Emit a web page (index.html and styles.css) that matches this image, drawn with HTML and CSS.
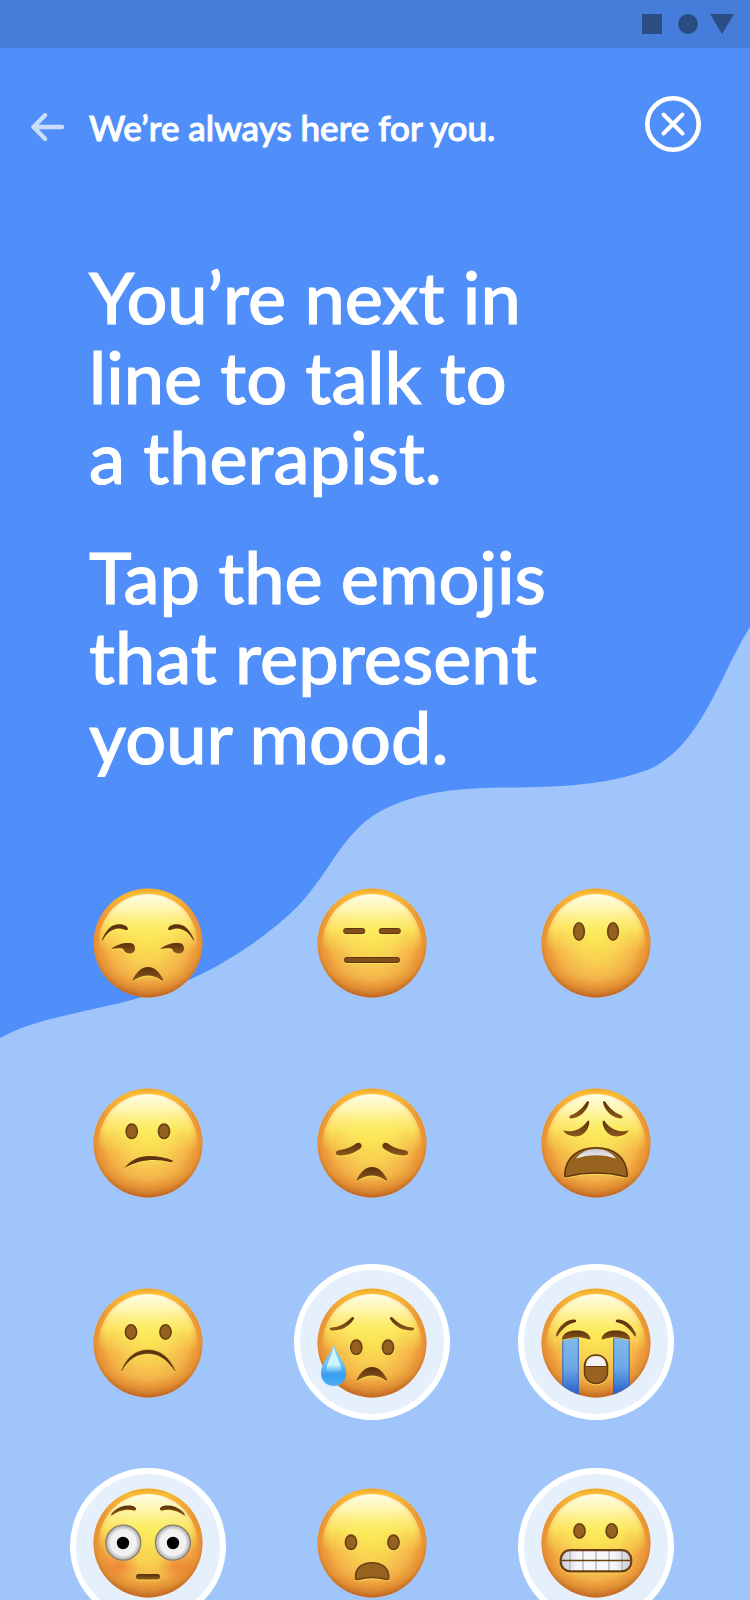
FILE: index.html
```html
<!DOCTYPE html>
<html lang="en">
<head>
<meta charset="utf-8">
<meta name="viewport" content="width=device-width, initial-scale=1">
<title>We’re always here for you.</title>
<link rel="stylesheet" href="styles.css">
</head>
<body>
<svg class="defs" width="0" height="0" aria-hidden="true">
  <defs>
    <linearGradient id="g-body" x1="0" y1="0" x2="0" y2="1">
      <stop offset="0" stop-color="#fbb02a"/><stop offset=".05" stop-color="#ffcb35"/>
      <stop offset=".25" stop-color="#f79f38"/><stop offset=".55" stop-color="#f4a03c"/>
      <stop offset=".8" stop-color="#f0a440"/><stop offset="1" stop-color="#e08c35"/>
    </linearGradient>
    <radialGradient id="g-glow" gradientUnits="userSpaceOnUse" cx="0" cy="-4" r="53">
      <stop offset="0" stop-color="#fbe150"/><stop offset=".45" stop-color="#f8d252" stop-opacity=".95"/>
      <stop offset=".75" stop-color="#f6c250" stop-opacity=".6"/><stop offset="1" stop-color="#f5b045" stop-opacity="0"/>
    </radialGradient>
    <linearGradient id="g-shine" x1="0" y1="0" x2="0" y2="1">
      <stop offset="0" stop-color="#fffde6"/><stop offset=".14" stop-color="#fffcc0" stop-opacity=".93"/>
      <stop offset=".36" stop-color="#fdf566" stop-opacity=".7"/><stop offset=".6" stop-color="#fbea5c" stop-opacity="0"/>
    </linearGradient>
    <radialGradient id="g-edge" gradientUnits="userSpaceOnUse" cx="0" cy="-5" r="60">
      <stop offset=".7" stop-color="#c8701f" stop-opacity="0"/><stop offset=".88" stop-color="#c0661c" stop-opacity=".25"/>
      <stop offset="1" stop-color="#b05218" stop-opacity=".75"/>
    </radialGradient>
    <linearGradient id="g-brown" x1="0" y1="0" x2="0" y2="1">
      <stop offset="0" stop-color="#5a300d"/><stop offset="1" stop-color="#8c581c"/>
    </linearGradient>
    <linearGradient id="g-drop" x1="0" y1="0" x2="0" y2="1">
      <stop offset="0" stop-color="#8fcdf0"/><stop offset=".45" stop-color="#6fc3f5"/>
      <stop offset=".75" stop-color="#3a9df0"/><stop offset="1" stop-color="#4fb2f6"/>
    </linearGradient>
    <linearGradient id="g-drop-light" x1="0" y1="0" x2="0" y2="1">
      <stop offset="0" stop-color="#e0f8fe"/><stop offset=".7" stop-color="#c4f4ff"/><stop offset="1" stop-color="#8fd8fb" stop-opacity="0"/>
    </linearGradient>
    <linearGradient id="g-stream" x1="0" y1="0" x2="0" y2="1">
      <stop offset="0" stop-color="#83b9e9"/><stop offset=".5" stop-color="#6ba9e6"/><stop offset="1" stop-color="#2255c8"/>
    </linearGradient>
    <radialGradient id="g-eyeball">
      <stop offset=".72" stop-color="#f1f1f1"/><stop offset="1" stop-color="#a8a8a8"/>
    </radialGradient>
    <radialGradient id="g-cheek">
      <stop offset="0" stop-color="#ec6a2c" stop-opacity=".6"/><stop offset="1" stop-color="#ec6a2c" stop-opacity="0"/>
    </radialGradient>
    <linearGradient id="g-teeth" x1="0" y1="0" x2="1" y2="0">
      <stop offset="0" stop-color="#c9cbd2"/><stop offset=".25" stop-color="#f6f7fa"/>
      <stop offset=".75" stop-color="#f6f7fa"/><stop offset="1" stop-color="#c9cbd2"/>
    </linearGradient>
    <linearGradient id="g-upper-teeth" x1="0" y1="0" x2="0" y2="1">
      <stop offset="0" stop-color="#c8c9cf"/><stop offset="1" stop-color="#f2f2f6"/>
    </linearGradient>
    <clipPath id="face-clip"><circle r="54.5"/></clipPath>
    <g id="head">
      <circle r="54.5" fill="url(#g-body)"/>
      <circle r="54.5" fill="url(#g-glow)"/>
      <circle r="49" fill="url(#g-shine)"/>
      <circle r="54.5" fill="url(#g-edge)"/>
    </g>
    <ellipse id="eye" rx="5.6" ry="7.2" fill="#94611f" stroke="#6b3f13" stroke-width="1.6"/>
    <path id="pout" d="M-15.5 37C-11 28-6 24 0 24C6 24 11 28 15.3 37C15.3 38 14 38 13 37C5 31-5 31-13.5 37C-14.5 38-15.8 38-15.5 37Z" fill="url(#g-brown)"/>
    <g id="ring"><circle r="75" fill="#e6f0fd" stroke="#fff" stroke-width="6"/></g>
  </defs>
</svg>

<div class="screen">
  <svg class="wave" viewBox="0 0 750 1600" preserveAspectRatio="none" aria-hidden="true">
    <path d="M0 1038C38 1017 90 1012 143 997C200 981 260 944 298 906C330 873 342 833 379 812C420 790 462 788 510 787.5C560 787 610 785 650 769C702 745 720 674 750 627V1600H0Z" fill="#a0c5fa"/>
  </svg>

  <div class="content">
    <div class="status-bar" aria-hidden="true">
      <svg width="92" height="20" viewBox="0 0 92 20" fill="#2a4d84"><path d="M0 0H20V20H0Z"/><circle cx="46" cy="10" r="10"/><path d="M68 0H92L80 20Z"/></svg>
    </div>

    <header class="header">
      <button class="back" type="button" aria-label="Back">
        <svg width="34" height="28" viewBox="0 0 34 28" fill="none" stroke="#cbddfd" stroke-width="4.4" stroke-linecap="round" stroke-linejoin="round"><path d="M14 2.2L2.5 14L14 25.8M2.5 14H31"/></svg>
      </button>
      <p class="header-title">We’re always here for you.</p>
      <button class="close" type="button" aria-label="Close">
        <svg width="56" height="56" viewBox="0 0 56 56" fill="none" stroke="#fff" stroke-width="4" stroke-linecap="round"><circle cx="28" cy="28" r="25.7" stroke-width="4.6"/><path d="M18.5 18.5L37.5 37.5M37.5 18.5L18.5 37.5"/></svg>
      </button>
    </header>

    <main class="main">
      <h1 class="prompt">
        <span class="prompt-part">You’re next in<br>line to talk to<br>a therapist.</span>
        <span class="prompt-part">Tap the emojis<br>that represent<br>your mood.</span>
      </h1>

      <div class="moods" role="group" aria-label="Moods">
        <button class="mood" type="button" aria-pressed="false" aria-label="Unamused">
          <svg class="face" viewBox="-78 -78 156 156"><use href="#head"/>
            <g class="marks" fill="url(#g-brown)">
              <path id="arch" d="M-46-3C-42-14-36-18.8-29-18.8C-24-18.8-21-17-20-14.5C-20-12.5-22-12.5-24-13.5C-33-17-41-11-45-3C-45.5-2.5-46-2.5-46-3Z" fill="#5e330f"/>
              <use href="#arch" transform="scale(-1 1)"/>
              <path id="side-eye" d="M-37 6C-31 1-24-.5-18 0C-14.5 .3-13 2.5-13 5.5C-13 9-15.5 11-19 10.5C-23 10-24 8-25 5.8C-29 4.8-33 5.5-37 6Z"/>
              <use href="#side-eye" x="49"/><use href="#pout"/>
            </g></svg>
        </button>
        <button class="mood" type="button" aria-pressed="false" aria-label="Expressionless">
          <svg class="face" viewBox="-78 -78 156 156"><use href="#head"/>
            <g class="marks" fill="#84501a" stroke="#5e3410"><rect x="-28.3" y="-14.5" width="21" height="5" rx="2"/><rect x="7.3" y="-14.5" width="21" height="5" rx="2"/><rect x="-27.5" y="14.5" width="55" height="5" rx="2"/></g></svg>
        </button>
        <button class="mood" type="button" aria-pressed="false" aria-label="Speechless">
          <svg class="face" viewBox="-78 -78 156 156"><use href="#head"/>
            <g class="marks" fill="#94611f" stroke="#6b3f13" stroke-width="1.6"><ellipse cx="-17" cy="-11.5" rx="5.3" ry="8.7"/><ellipse cx="17" cy="-11.5" rx="5.3" ry="8.7"/></g></svg>
        </button>

        <button class="mood" type="button" aria-pressed="false" aria-label="Confused">
          <svg class="face" viewBox="-78 -78 156 156"><use href="#head"/>
            <g class="marks"><use href="#eye" x="-16.3" y="-11.7"/><use href="#eye" x="16" y="-11.7"/>
            <path d="M-23.5 25C-17 16.5-8 13 1 13C10 13 18 14.5 24.5 17.5C25 19 24 19.5 22 19C8 15.5-8 16-23.5 25Z" fill="#5e330f"/></g></svg>
        </button>
        <button class="mood" type="button" aria-pressed="false" aria-label="Disappointed">
          <svg class="face" viewBox="-78 -78 156 156"><use href="#head"/>
            <g class="marks" fill="url(#g-brown)">
              <path id="droop" d="M-34 12.2C-37 12-37 7.8-33 7.3C-26 6.5-20 3.5-15.5 .2C-12-1.8-9 2.2-11 4.8C-16.5 10-26 13.2-34 12.2Z"/>
              <use href="#droop" transform="scale(-1 1)"/><use href="#pout"/></g></svg>
        </button>
        <button class="mood" type="button" aria-pressed="false" aria-label="Weary">
          <svg class="face" viewBox="-78 -78 156 156"><use href="#head"/>
            <g class="marks" fill="url(#g-brown)">
              <path id="weary-brow" d="M-25-24.5C-27.5-25-27-27.5-24.5-28C-17-31-13-36-9-41.5C-7.5-43-6.5-41-7.5-38.5C-10-31-17-25-25-24.5Z"/>
              <use href="#weary-brow" transform="scale(-1 1)"/>
              <path id="weary-eye" d="M-33-12.5C-26-10.5-15-12-8.5-22C-7.5-23.5-6.3-22-6.8-19C-9-9-16-6.5-21-6.5C-27-7-31-9-33-12.5Z"/>
              <use href="#weary-eye" transform="scale(-1 1)"/>
              <path d="M-31.3 32C-30.5 14-18 4.7 0 4.7C18 4.7 30.5 14 31.3 32C31.3 34 30.5 34 29 33.5C10 29-10 29-29 33.5C-30.5 34-31.3 34-31.3 32Z" fill="#97631f" stroke="#63370f" stroke-width="1.6"/>
              <path d="M-20 15.5C-15 9-8 6 0 6C8 6 15 9 20 15.5C8 11-8 11-20 15.5Z" fill="url(#g-upper-teeth)"/></g></svg>
        </button>

        <button class="mood" type="button" aria-pressed="false" aria-label="Frowning">
          <svg class="face" viewBox="-78 -78 156 156"><use href="#head"/>
            <g class="marks"><use href="#eye" x="-17" y="-11"/><use href="#eye" x="17.5" y="-11"/>
            <path d="M-26.5 28C-21 13-11 7 0 7C11 7 21 13 27 28C18 15 10 10.5 0 10.5C-10 10.5-19 15-26.5 28Z" fill="#5e330f" stroke="#5e330f" stroke-width=".5"/></g></svg>
        </button>
        <button class="mood" type="button" aria-pressed="true" aria-label="Sad but relieved">
          <svg class="face" viewBox="-78 -78 156 156"><use href="#ring" y="-1"/><use href="#head"/>
            <g class="marks" fill="url(#g-brown)">
              <path id="sad-brow" d="M-40-12.5C-43-13-43-15.5-39.5-15.5C-31-16-25-21-20.5-25.5C-18.5-27-17-25.5-18.5-23.5C-23-16-32-12-40-12.5Z"/>
              <use href="#sad-brow" transform="scale(-1 1)"/>
              <use href="#eye" x="-15.7" y="4.3"/><use href="#eye" x="16" y="4.3"/><use href="#pout"/></g>
            <path d="M-38.3 1C-36 11-25.7 19-25.7 30.5C-25.7 37.5-31 43-38.3 43C-45.5 43-51 37.5-51 30.5C-51 19-40.5 11-38.3 1Z" fill="url(#g-drop)"/>
            <path d="M-38.3 4C-36 13-31 20-30.5 27C-33 31-43 31-46 27C-45 20-40.5 13-38.3 4Z" fill="url(#g-drop-light)"/></svg>
        </button>
        <button class="mood" type="button" aria-pressed="true" aria-label="Crying loudly">
          <svg class="face" viewBox="-78 -78 156 156"><use href="#ring" y="-1"/><use href="#head"/>
            <g clip-path="url(#face-clip)" fill="url(#g-stream)" stroke="#2b67cf"><rect x="-33.2" y="-5" width="15.5" height="60"/><rect x="17.7" y="-5" width="15.5" height="60"/></g>
            <g class="marks" fill="url(#g-brown)">
              <path id="cry-brow" d="M-39.5-6.5C-40.5-7-40-9.5-39-11C-35-19-28-24-21.5-23.5C-19-23-19.5-21-21.5-20.5C-28-19-33-15-38-7.5C-38.5-6.5-39-6-39.5-6.5Z"/>
              <use href="#cry-brow" transform="scale(-1 1)"/>
              <path id="cry-eye" d="M-34-5C-32-11-25-13-19.5-12.5C-12-12.5-7-10-5.5-4.5C-5.5-3-7-3.5-8.5-4C-16-7-25-6-32-3.5C-33.5-3-34.5-3.5-34-5Z"/>
              <use href="#cry-eye" transform="scale(-1 1)"/>
              <rect x="-11.5" y="12" width="23" height="28.5" rx="11" fill="#97631f" stroke="#6b3f13" stroke-width="1.6"/>
              <path d="M-10 23C-10 16-5.5 13 0 13C5.5 13 10 16 10 23Z" fill="#f4f4f6"/><path d="M-10.5 23.5H10.5" stroke="#63370f"/></g></svg>
        </button>

        <button class="mood" type="button" aria-pressed="true" aria-label="Flushed">
          <svg class="face" viewBox="-78 -78 156 156"><use href="#ring" y="3"/><use href="#head"/>
            <ellipse cx="-29" cy="23" rx="20" ry="15" fill="url(#g-cheek)"/><ellipse cx="30" cy="23" rx="20" ry="15" fill="url(#g-cheek)"/>
            <g class="marks" fill="url(#g-brown)">
              <path id="raised-brow" d="M-37-28C-36.5-31-29-37.5-20-37.5C-14-37.5-11.5-35.5-12-33.5C-12.5-32-15-32.5-17-33C-25-34-31-31-35-28.2C-36-27.5-37-27-37-28Z"/>
              <use href="#raised-brow" transform="scale(-1 1)"/>
              <rect x="-12" y="31" width="24" height="5.6" rx="2.5"/></g>
            <g stroke="#8b8070" stroke-width="1.3"><circle cx="-24.7" cy="-.3" r="17.5" fill="url(#g-eyeball)"/><circle cx="24.9" cy="-.3" r="17.5" fill="url(#g-eyeball)"/></g>
            <circle cx="-25" r="6.2"/><circle cx="25" r="6.2"/></svg>
        </button>
        <button class="mood" type="button" aria-pressed="false" aria-label="Worried">
          <svg class="face" viewBox="-78 -78 156 156"><use href="#head"/>
            <g class="marks"><use href="#eye" x="-21" y="-.7"/><use href="#eye" x="21.5" y="-.7"/>
            <path d="M-16.5 34C-16.5 25-10 19.7 0 19.7C10 19.7 16.5 25 16.7 34C16.7 36.5 16 36.8 13.5 36.3C5 34-5 34-13 36.3C-16 36.8-16.5 36.5-16.5 34Z" fill="#97631f" stroke="#6b3f13" stroke-width="1.6"/></g></svg>
        </button>
        <button class="mood" type="button" aria-pressed="true" aria-label="Grimacing">
          <svg class="face" viewBox="-78 -78 156 156"><use href="#ring" y="3"/><use href="#head"/>
            <g class="marks"><use href="#eye" x="-16.5" y="-12"/><use href="#eye" x="15.7" y="-12"/>
            <rect x="-35.3" y="7.2" width="70.6" height="21.2" rx="9.5" fill="url(#g-teeth)"/>
            <path d="M-26 8V28M-13 8V28M0 8V28M13 8V28M26 8V28" stroke="#a9abb3" stroke-width="1.2"/>
            <path d="M-35 17.5H35" stroke="#6b3f13" stroke-width="1.3"/>
            <rect x="-35.3" y="7.2" width="70.6" height="21.2" rx="9.5" fill="none" stroke="#6b3f13" stroke-width="2.2"/></g></svg>
        </button>
      </div>
    </main>
  </div>
</div>
</body>
</html>
```
FILE: styles.css
```css
* {
  box-sizing: border-box;
}

body {
  margin: 0;
  color: #fff;
  font-family: Lato, "Open Sans", sans-serif;
  font-weight: 500;
}

button {
  padding: 0;
  border: 0;
  background: none;
  color: inherit;
  font: inherit;
  cursor: pointer;
}

svg {
  display: block;
}

.defs {
  position: absolute;
}

.screen {
  display: grid;
  grid-template: minmax(0, 1fr) / minmax(0, 1fr);
  height: 100vh;
  overflow: hidden;
  background: #508ff9;
}

.wave,
.content {
  grid-area: 1 / 1;
  width: 100%;
  height: 100%;
}

.content {
  display: flex;
  flex-direction: column;
  z-index: 1;
}

.status-bar {
  display: flex;
  flex: none;
  align-items: center;
  justify-content: flex-end;
  height: 48px;
  padding-right: 16px;
  background: #467dda;
}

.header {
  display: flex;
  flex: none;
  align-items: flex-start;
  gap: 24px;
  padding: 48px 49px 0 31px;
}

.back {
  display: flex;
  align-items: center;
  height: 62px;
}

.header-title {
  margin: 0;
  font-size: 35px;
  line-height: 62px;
  -webkit-text-stroke: 1px currentColor;
}

.close {
  margin-left: auto;
}

.main {
  flex: 1;
  min-height: 0;
  overflow-y: auto;
  scrollbar-width: none;
}

.prompt {
  display: flex;
  flex-direction: column;
  gap: 40px;
  margin: 0;
  padding: 98px 89px 89px;
  font-size: 72px;
  font-weight: 500;
  line-height: 80px;
  -webkit-text-stroke: 1px currentColor;
}

.prompt-part {
  display: block;
}

.moods {
  display: grid;
  grid-template-columns: repeat(3, 1fr);
  justify-items: center;
  gap: 44px 0;
  padding: 0 42px 44px 36px;
}

.mood {
  width: 156px;
  height: 156px;
  border-radius: 50%;
}

.face {
  width: 100%;
  height: 100%;
  overflow: visible;
}

.marks {
  filter: drop-shadow(0 1px 0 rgba(255, 233, 90, 0.7));
}
```
